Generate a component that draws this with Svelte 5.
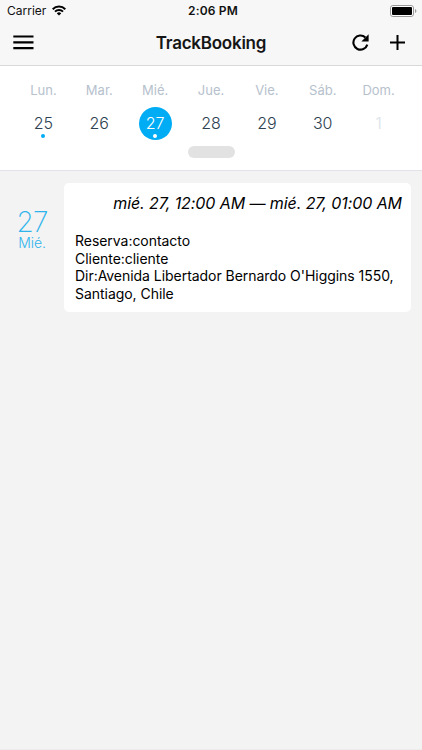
<script>
  const days = [
    { name: "Lun.", number: 25, marked: true },
    { name: "Mar.", number: 26 },
    { name: "Mié.", number: 27, marked: true },
    { name: "Jue.", number: 28 },
    { name: "Vie.", number: 29 },
    { name: "Sáb.", number: 30 },
    { name: "Dom.", number: 1, disabled: true },
  ];

  const bookings = [
    {
      day: 27,
      dayName: "Mié.",
      time: "mié. 27, 12:00 AM — mié. 27, 01:00 AM",
      reserva: "contacto",
      cliente: "cliente",
      dir: "Avenida Libertador Bernardo O'Higgins 1550, Santiago, Chile",
    },
  ];

  let selected = $state(27);
</script>

<div class="screen">
  <header>
    <div class="status">
      <div class="carrier">
        <span>Carrier</span>
        <svg width="14" height="11" viewBox="0 0 14 11">
          <g fill="none" stroke="#000" stroke-width="2">
            <path d="M0.7 4.2a8.9 8.9 0 0 1 12.6 0" />
            <path d="M3 6.6a5.6 5.6 0 0 1 8 0" />
          </g>
          <path d="M7 10.6L4.8 8.4a3.1 3.1 0 0 1 4.4 0z" />
        </svg>
      </div>
      <span class="clock">2:06 PM</span>
      <svg class="battery" width="27" height="12" viewBox="0 0 27 12">
        <rect x="0.5" y="0.5" width="23" height="11" rx="2.4" fill="#fff" stroke="#999" />
        <rect x="2" y="2" width="20" height="8" rx="1" />
        <path d="M25 4v4c1.9-.6 1.9-3.4 0-4z" fill="#999" />
      </svg>
    </div>
    <nav>
      <button class="menu" aria-label="Menu">
        <svg width="21" height="15" viewBox="0 0 21 15">
          <path d="M0.3 1.5h20.2M0.3 7.4h20.2M0.3 13.1h20.2" stroke="#000" stroke-width="2.2" />
        </svg>
      </button>
      <h1>TrackBooking</h1>
      <div class="actions">
        <button aria-label="Refresh">
          <svg width="17" height="17" viewBox="0 0 17 17">
            <path
              d="M15.3 10.6A7.1 7.1 0 1 1 13.4 3.4"
              fill="none"
              stroke="#000"
              stroke-width="2.1"
            />
            <path d="M16.6 0.2v7.2H9.4z" />
          </svg>
        </button>
        <button aria-label="Add">
          <svg width="15" height="15" viewBox="0 0 15 15">
            <path d="M7.5 0v15M0 7.5h15" stroke="#000" stroke-width="2" />
          </svg>
        </button>
      </div>
    </nav>
  </header>

  <section class="calendar">
    <div class="week">
      {#each days as day}
        <div class="day">
          <span class="name">{day.name}</span>
          <button
            class="number"
            class:selected={day.number === selected}
            class:disabled={day.disabled}
            onclick={() => (selected = day.number)}
          >
            {day.number}
            {#if day.marked}
              <i class="dot"></i>
            {/if}
          </button>
        </div>
      {/each}
    </div>
    <div class="knob"></div>
  </section>

  <main>
    {#each bookings as booking}
      <div class="row">
        <div class="date">
          <span class="big">{booking.day}</span>
          <span class="small">{booking.dayName}</span>
        </div>
        <article>
          <p class="time">{booking.time}</p>
          <p class="line">Reserva:{booking.reserva}</p>
          <p class="line">Cliente:{booking.cliente}</p>
          <p class="line">Dir:{booking.dir}</p>
        </article>
      </div>
    {/each}
  </main>
</div>

<style>
  :global(body) {
    background: #f3f3f3;
    font-family: Inter, "Liberation Sans", sans-serif;
  }

  .screen {
    display: flex;
    flex-direction: column;
    height: 750px;
    box-sizing: border-box;
    overflow: hidden;
    border-bottom: 1px solid #ececec;
    background: #f3f3f3;
  }

  button {
    display: flex;
    padding: 0;
    border: 0;
    background: none;
    font-family: inherit;
  }

  svg {
    display: block;
  }

  header {
    height: 65px;
    flex: none;
    background: #f7f7f7;
    border-bottom: 1px solid #d9d9db;
  }

  .status {
    display: grid;
    grid-template-columns: 1fr auto 1fr;
    align-items: center;
    height: 21px;
    padding: 0 5px 0 7px;
    font-size: 12px;
    color: #111;
  }

  .carrier {
    display: flex;
    align-items: center;
    gap: 5.5px;
  }

  .clock {
    padding-left: 2px;
    font-weight: 600;
    letter-spacing: 0.15px;
  }

  .battery {
    justify-self: end;
  }

  nav {
    display: grid;
    grid-template-columns: 1fr auto 1fr;
    align-items: center;
    height: 42px;
    padding: 0 17px 0 13px;
  }

  h1 {
    margin: 0;
    padding: 2px 0 0 4px;
    font-size: 17px;
    font-weight: 600;
    letter-spacing: -0.25px;
    line-height: 22px;
    color: #151515;
  }

  .actions {
    display: flex;
    justify-content: flex-end;
    align-items: center;
    gap: 21.5px;
  }

  .calendar {
    display: flex;
    flex-direction: column;
    align-items: center;
    height: 104px;
    flex: none;
    background: #fff;
    border-bottom: 1px solid #e2e3e8;
  }

  .week {
    display: flex;
    width: 391px;
    padding-top: 16px;
  }

  .day {
    flex: 1;
    display: flex;
    flex-direction: column;
    align-items: center;
  }

  .name {
    font-size: 13px;
    line-height: 16px;
    color: #b6c1cd;
  }

  .number {
    position: relative;
    justify-content: center;
    width: 33px;
    height: 33px;
    margin-top: 9px;
    border-radius: 50%;
    font-size: 16px;
    font-weight: 300;
    line-height: 33px;
    color: #2d4150;
  }

  .selected {
    background: #00adf5;
    color: #fff;
  }

  .disabled {
    color: #d9e1e8;
  }

  .dot {
    position: absolute;
    left: 14px;
    bottom: 2px;
    width: 4px;
    height: 4px;
    border-radius: 50%;
    background: #00adf5;
  }

  .selected .dot {
    background: #fff;
  }

  .knob {
    width: 47px;
    height: 12px;
    margin-top: 6px;
    border-radius: 6px;
    background: #e2e2e2;
  }

  .row {
    display: flex;
    padding: 12px 11px 0 0;
  }

  .date {
    display: flex;
    flex-direction: column;
    align-items: center;
    width: 64px;
    padding-top: 25px;
    color: #2fb3ec;
  }

  .big {
    font-size: 28px;
    font-weight: 200;
    letter-spacing: -1px;
    line-height: 28px;
  }

  .small {
    font-size: 14px;
    font-weight: 300;
    letter-spacing: -0.1px;
    line-height: 14px;
  }

  article {
    flex: 1;
    height: 129px;
    padding: 10px 9px 9px 11px;
    box-sizing: border-box;
    border-radius: 5px;
    background: #fff;
    color: #000;
  }

  p {
    margin: 0;
  }

  .time {
    margin-bottom: 19.3px;
    font-size: 16px;
    font-style: italic;
    letter-spacing: -0.08px;
    line-height: 20px;
    text-align: right;
    white-space: nowrap;
  }

  .line {
    font-size: 14px;
    letter-spacing: -0.04px;
    line-height: 17.4px;
  }
</style>
